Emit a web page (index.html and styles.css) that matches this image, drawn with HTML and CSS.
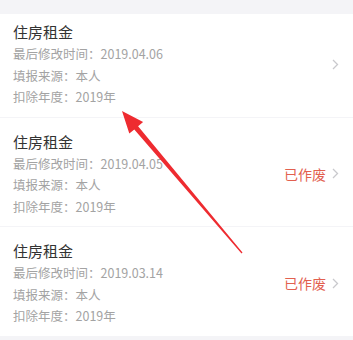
FILE: index.html
```html
<!DOCTYPE html>
<html lang="zh-CN">
<head>
<meta charset="utf-8">
<link rel="stylesheet" href="styles.css">
</head>
<body>
<div class="list">
  <div class="card first">
    <div class="info">
      <div class="title">住房租金</div>
      <div class="line">最后修改时间：2019.04.06</div>
      <div class="line">填报来源：本人</div>
      <div class="line">扣除年度：2019年</div>
    </div>
    <div class="side">
      <svg class="chev" width="7" height="11" viewBox="0 0 7 11"><path d="M1 1 L5.5 5.5 L1 10" fill="none" stroke="#c9c9cd" stroke-width="1.3"/></svg>
    </div>
  </div>
  <div class="card">
    <div class="info">
      <div class="title">住房租金</div>
      <div class="line">最后修改时间：2019.04.05</div>
      <div class="line">填报来源：本人</div>
      <div class="line">扣除年度：2019年</div>
    </div>
    <div class="side">
      <span class="status">已作废</span>
      <svg class="chev" width="7" height="11" viewBox="0 0 7 11"><path d="M1 1 L5.5 5.5 L1 10" fill="none" stroke="#c9c9cd" stroke-width="1.3"/></svg>
    </div>
  </div>
  <div class="card">
    <div class="info">
      <div class="title">住房租金</div>
      <div class="line">最后修改时间：2019.03.14</div>
      <div class="line">填报来源：本人</div>
      <div class="line">扣除年度：2019年</div>
    </div>
    <div class="side">
      <span class="status">已作废</span>
      <svg class="chev" width="7" height="11" viewBox="0 0 7 11"><path d="M1 1 L5.5 5.5 L1 10" fill="none" stroke="#c9c9cd" stroke-width="1.3"/></svg>
    </div>
  </div>
</div>
<svg class="arrow" width="353" height="340" viewBox="0 0 353 340">
  <polygon points="122,111 143.1,122 138.1,126.2 242.5,252.6 241.5,253.4 134.3,129.4 129.3,133.6" fill="#ee2b30"/>
</svg>
</body>
</html>
```
FILE: styles.css
```css
html, body {
  margin: 0;
  padding: 0;
}
body {
  background: #f4f4f7;
  width: 353px;
  height: 340px;
  overflow: hidden;
  position: relative;
  font-family: "Noto Sans CJK SC", "Noto Sans", sans-serif;
}
.list {
  padding-top: 14px;
  display: flex;
  flex-direction: column;
  gap: 1px;
}
.card {
  background: #fff;
  display: flex;
  align-items: center;
  justify-content: space-between;
  padding: 13px 14px 9px 13px;
}
.card.first {
  padding-top: 7px;
}
.info {
  display: flex;
  flex-direction: column;
}
.title {
  font-size: 15px;
  line-height: 22px;
  color: #333;
}
.line {
  font-size: 12.5px;
  line-height: 21.5px;
  color: #a3a3a3;
}
.side {
  display: flex;
  align-items: center;
  gap: 6px;
}
.status {
  font-size: 14px;
  color: #e2604f;
}
.chev {
  display: block;
}
.arrow {
  position: absolute;
  left: 0;
  top: 0;
}
```
